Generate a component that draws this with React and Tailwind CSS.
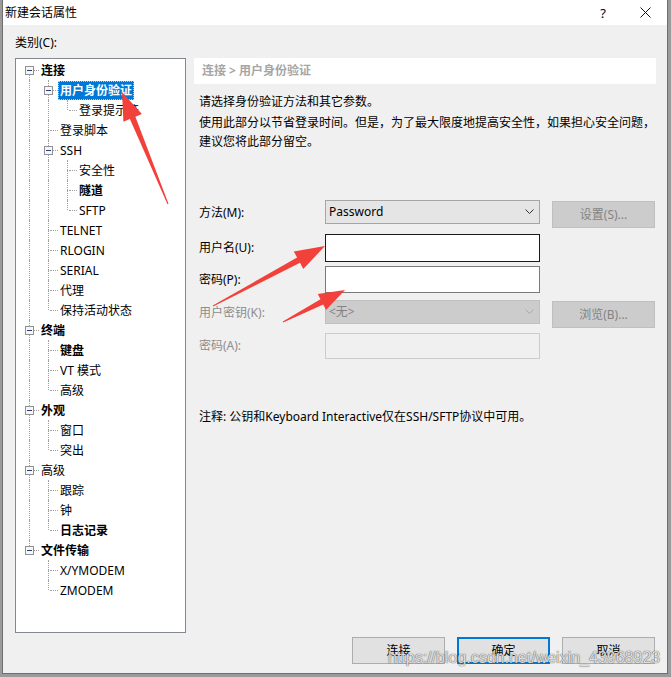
import React from "react";

const tree = [
  {
    label: "连接",
    bold: true,
    children: [
      { label: "用户身份验证", bold: true, selected: true, children: [{ label: "登录提示符" }] },
      { label: "登录脚本" },
      { label: "SSH", children: [{ label: "安全性" }, { label: "隧道", bold: true }, { label: "SFTP" }] },
      { label: "TELNET" },
      { label: "RLOGIN" },
      { label: "SERIAL" },
      { label: "代理" },
      { label: "保持活动状态" },
    ],
  },
  { label: "终端", bold: true, children: [{ label: "键盘", bold: true }, { label: "VT 模式" }, { label: "高级" }] },
  { label: "外观", bold: true, children: [{ label: "窗口" }, { label: "突出" }] },
  { label: "高级", children: [{ label: "跟踪" }, { label: "钟" }, { label: "日志记录", bold: true }] },
  { label: "文件传输", bold: true, children: [{ label: "X/YMODEM" }, { label: "ZMODEM" }] },
];

function flatten(nodes, level, anc, out) {
  nodes.forEach((n, i) => {
    const hasNext = i < nodes.length - 1;
    out.push({
      ...n,
      level,
      anc,
      hasNext,
      firstRoot: level === 0 && i === 0,
      hasChildren: !!(n.children && n.children.length),
    });
    if (n.children) flatten(n.children, level + 1, [...anc, hasNext], out);
  });
  return out;
}

const rows = flatten(tree, 0, [], []);

function TreeRow({ r }) {
  return (
    <div className="flex h-[20px] items-center">
      {r.anc.map((a, i) => (
        <div key={i} className="relative h-[20px] w-[19px] shrink-0">
          {a && <div className="absolute left-[9px] top-0 bottom-0 border-l border-dotted border-[#a0a0a0]" />}
        </div>
      ))}
      <div className="relative h-[20px] w-[19px] shrink-0">
        {!r.firstRoot && <div className="absolute left-[9px] top-0 h-[10px] border-l border-dotted border-[#a0a0a0]" />}
        {r.hasNext && <div className="absolute left-[9px] top-[10px] bottom-0 border-l border-dotted border-[#a0a0a0]" />}
        <div className="absolute left-[11px] right-0 top-[10px] border-t border-dotted border-[#a0a0a0]" />
        {r.hasChildren && (
          <div className="absolute left-[5px] top-[6px] flex h-[9px] w-[9px] items-center justify-center border border-[#919191] bg-[#f6f6f6]">
            <div className="h-[1px] w-[5px] bg-[#2c3f7a]" />
          </div>
        )}
      </div>
      <span
        className={
          "h-[19px] whitespace-nowrap px-[2px] text-[12px] leading-[19px] " +
          (r.bold ? "font-bold " : "") +
          (r.selected
            ? "bg-[#0078d7] text-white [outline:1px_dotted_#f5c16c] [outline-offset:-1px]"
            : "text-black")
        }
      >
        {r.label}
      </span>
    </div>
  );
}

function Chevron({ color = "#333" }) {
  return (
    <svg width="9" height="6" viewBox="0 0 9 6">
      <path d="M0.5 0.5 L4.5 4.5 L8.5 0.5" fill="none" stroke={color} strokeWidth="1" />
    </svg>
  );
}

function arrowPoints(tail, tip, headLen, headW, shaftW, tailW) {
  const dx = tip[0] - tail[0];
  const dy = tip[1] - tail[1];
  const len = Math.hypot(dx, dy);
  const ux = dx / len;
  const uy = dy / len;
  const nx = -uy;
  const ny = ux;
  const bx = tip[0] - ux * headLen;
  const by = tip[1] - uy * headLen;
  const pts = [
    [tail[0] + (nx * tailW) / 2, tail[1] + (ny * tailW) / 2],
    [bx + (nx * shaftW) / 2, by + (ny * shaftW) / 2],
    [bx + (nx * headW) / 2, by + (ny * headW) / 2],
    tip,
    [bx - (nx * headW) / 2, by - (ny * headW) / 2],
    [bx - (nx * shaftW) / 2, by - (ny * shaftW) / 2],
    [tail[0] - (nx * tailW) / 2, tail[1] - (ny * tailW) / 2],
  ];
  return pts.map((p) => p[0].toFixed(1) + "," + p[1].toFixed(1)).join(" ");
}

export default function App() {
  const font = "font-['Noto_Sans','Noto_Sans_CJK_SC',sans-serif]";
  return (
    <div className={"relative h-[677px] w-[671px] overflow-hidden bg-[#9b9b9b] " + font}>
      <div className="ml-[2px] flex h-[674px] w-[666px] flex-col border-x border-b border-[#6f6f6f] bg-[#f0f0f0]">
        {/* title bar */}
        <div className="flex h-[25px] shrink-0 items-center bg-white pl-[2px]">
          <span className="text-[12px] leading-[16px] text-black">新建会话属性</span>
          <span className="ml-auto mr-[34px] text-[13px] leading-[16px] text-black">?</span>
          <svg width="11" height="11" viewBox="0 0 11 11" className="mr-[16px]">
            <path d="M0.5 0.5 L10.5 10.5 M10.5 0.5 L0.5 10.5" stroke="#111" strokeWidth="1" />
          </svg>
        </div>

        {/* body */}
        <div className="flex pl-[12px]">
          {/* left column */}
          <div className="flex w-[171px] shrink-0 flex-col">
            <div className="mt-[10px] h-[16px] text-[12px] leading-[16px]">类别(C):</div>
            <div className="mt-[7px] h-[575px] border border-[#828790] bg-white pl-[4px] pt-[1px]">
              {rows.map((r, i) => (
                <TreeRow key={i} r={r} />
              ))}
            </div>
          </div>

          {/* right column */}
          <div className="ml-[8px] flex w-[462px] flex-col pt-[33px]">
            <div className="flex h-[26px] items-center bg-white pl-[8px] text-[12px] font-bold text-[#a6a6a6]">
              连接 &gt; 用户身份验证
            </div>
            <div className="pl-[5px] text-[12px] text-black">
              <div className="mt-[8px] leading-[19px]">请选择身份验证方法和其它参数。</div>
              <div className="mt-[2px] whitespace-nowrap leading-[19px]">
                使用此部分以节省登录时间。但是，为了最大限度地提高安全性，如果担心安全问题，
                <br />
                建议您将此部分留空。
              </div>

              {/* form */}
              <div className="mt-[49px] flex items-start">
                <div className="h-[24px] w-[126px] leading-[26px]">方法(M):</div>
                <div className="flex h-[24px] w-[215px] items-center justify-between border border-[#a5a5a5] bg-[#e5e5e5] pl-[3px] pr-[5px]">
                  <span className="text-[12px]">Password</span>
                  <Chevron />
                </div>
                <div className="ml-[12px] mt-[1px] flex h-[27px] w-[103px] items-center justify-center border border-[#bfbfbf] bg-[#cccccc] text-[#838383]">
                  设置(S)...
                </div>
              </div>

              <div className="mt-[6px] flex items-center">
                <div className="w-[126px]">用户名(U):</div>
                <div className="h-[28px] w-[215px] border border-[#1a1a1a] bg-white" />
              </div>

              <div className="mt-[4px] flex items-center">
                <div className="w-[126px]">密码(P):</div>
                <div className="h-[27px] w-[215px] border border-[#7a7a7a] bg-white" />
              </div>

              <div className="mt-[7px] flex items-start">
                <div className="h-[24px] w-[126px] leading-[26px] text-[#8d8d8d]">用户密钥(K):</div>
                <div className="flex h-[24px] w-[215px] items-center justify-between border border-[#bfbfbf] bg-[#cccccc] pl-[3px] pr-[5px] text-[#838383]">
                  <span>&lt;无&gt;</span>
                  <Chevron color="#a8a8a8" />
                </div>
                <div className="ml-[12px] mt-[1px] flex h-[27px] w-[103px] items-center justify-center border border-[#bfbfbf] bg-[#cccccc] text-[#838383]">
                  浏览(B)...
                </div>
              </div>

              <div className="mt-[5px] flex items-center">
                <div className="w-[126px] text-[#8d8d8d]">密码(A):</div>
                <div className="h-[26px] w-[215px] border border-[#cccccc] bg-[#f0f0f0]" />
              </div>

              <div className="mt-[49px] leading-[18px]">
                注释: 公钥和Keyboard Interactive仅在SSH/SFTP协议中可用。
              </div>
            </div>
          </div>
        </div>

        {/* buttons */}
        <div className="mt-[4px] flex justify-end gap-[12px] pr-[12px] text-[12px]">
          <div className="flex h-[27px] w-[93px] items-center justify-center border border-[#adadad] bg-[#e1e1e1]">连接</div>
          <div className="flex h-[27px] w-[93px] items-center justify-center border-2 border-[#0078d7] bg-[#e1e1e1]">确定</div>
          <div className="flex h-[27px] w-[93px] items-center justify-center border border-[#adadad] bg-[#e1e1e1]">取消</div>
        </div>
      </div>

      {/* watermark */}
      <div className="pointer-events-none absolute left-[388px] top-[649px] whitespace-nowrap font-['Liberation_Sans',sans-serif] text-[16px] leading-[18px] text-[rgba(250,250,250,0.85)] [text-shadow:0_0_1px_rgba(40,40,40,0.8),0_0_1px_rgba(40,40,40,0.5)]">
        https://blog.csdn.net/weixin_43968923
      </div>

      {/* annotation arrows */}
      <svg className="pointer-events-none absolute left-0 top-0" width="671" height="677">
        <polygon points={arrowPoints([168, 204], [122, 92], 28, 20, 6, 1)} fill="#f2403a" />
        <polygon points={arrowPoints([213, 306], [325, 246], 30, 20, 6, 1)} fill="#f2403a" />
        <polygon points={arrowPoints([283, 322], [345, 290], 26, 18, 6, 1)} fill="#f2403a" />
      </svg>
    </div>
  );
}
